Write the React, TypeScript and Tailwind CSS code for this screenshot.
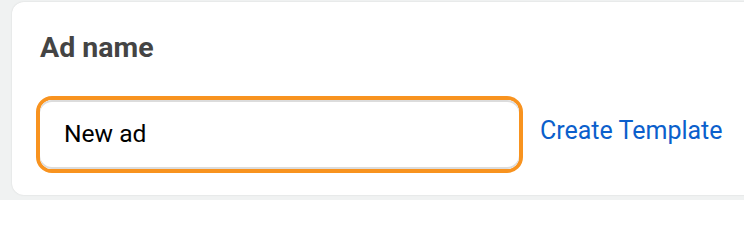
import { useState } from "react";

export default function App() {
  const [name, setName] = useState("New ad");

  return (
    <div className="h-[200px] w-[744px] overflow-hidden bg-[#f0f2f2] pl-[12px] pt-[2px] font-['Roboto',sans-serif]">
      <div className="w-[780px] h-[193px] rounded-[12px] bg-white shadow-[0_0_2px_rgba(0,0,0,0.12)] px-6 pt-[30px]">
        <h2 className="ml-1 text-[28.5px] leading-[32px] font-bold text-[#444]">
          Ad name
        </h2>

        <div className="mt-[32px] flex items-center">
          <div className="w-[487px] rounded-[16px] border-4 border-[#f8931f]">
            <div className="flex h-[69px] items-center rounded-[12px] bg-white pl-[24px] shadow-[inset_0_2px_0_#dcdcdc,inset_0_-2px_0_#dcdcdc]">
              <input
                value={name}
                onChange={(e) => setName(e.target.value)}
                className="w-full bg-transparent text-[24.6px] text-black outline-none"
              />
            </div>
          </div>
          <a
            href="#"
            className="ml-[17px] mb-[7px] text-[25px] text-[#0b5fcc] whitespace-nowrap"
          >
            Create Template
          </a>
        </div>
      </div>
    </div>
  );
}
